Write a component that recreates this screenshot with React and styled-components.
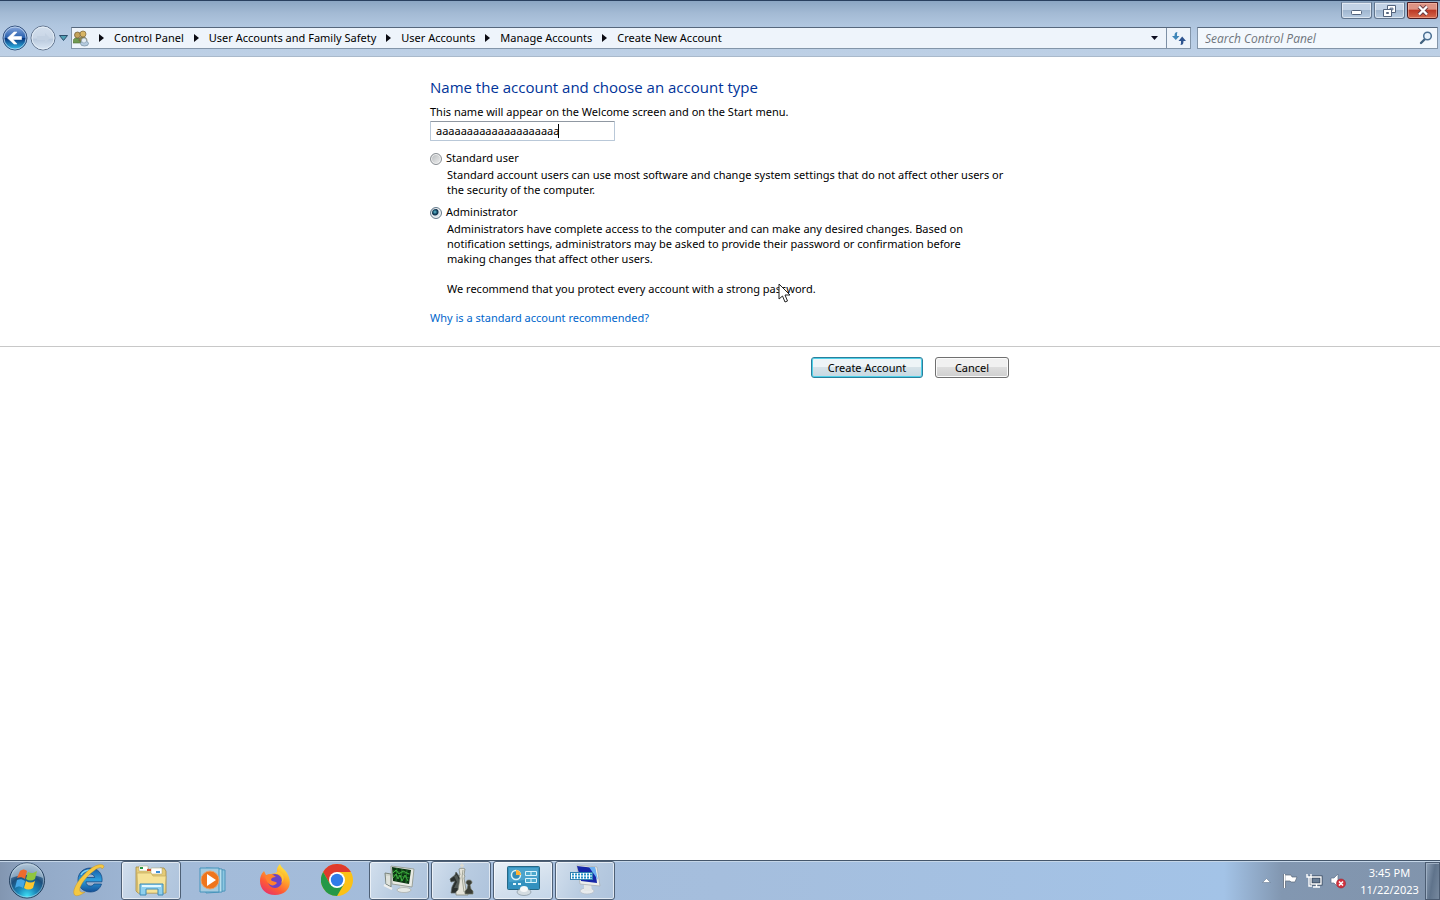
import React, { useState } from "react";
import styled, { createGlobalStyle, css } from "styled-components";

const GlobalStyle = createGlobalStyle`
  * { box-sizing: border-box; }
  body {
    margin: 0;
    background: #fff;
    color: #000;
    font: 11px/15px "Noto Sans", "Open Sans", sans-serif;
  }
  button, input { font: inherit; color: inherit; }
`;

const Desktop = styled.div`
  display: flex;
  flex-direction: column;
  min-height: 100vh;
`;

/* ---------- window frame ---------- */
const Frame = styled.header`
  border-top: 1px solid #29405f;
  border-bottom: 1px solid #a9b9cb;
  background: linear-gradient(#8ba6c3 0, #a3bad4 12px, #b0c6df 24px, #b9cee6 40px, #bed0e5 56px);
`;

const TitleBar = styled.div`
  display: flex;
  justify-content: flex-end;
  gap: 2px;
  height: 24px;
  padding: 1px 2px 0 0;
`;

const CaptionButton = styled.button`
  display: flex;
  align-items: center;
  justify-content: center;
  width: 31px;
  height: 17px;
  padding: 0;
  border: 1px solid #61758e;
  border-top-color: #8a9db5;
  border-radius: 0 0 3px 3px;
  box-shadow: inset 0 0 0 1px rgba(255, 255, 255, 0.5);
  background: linear-gradient(#c3d3e6 45%, #a0b6cf 50%, #b8cce2);
  ${(p) =>
    p.$close &&
    css`
      border-color: #4b1b20;
      box-shadow: inset 0 0 0 1px rgba(255, 200, 180, 0.5);
      background: linear-gradient(#dd9384 40%, #bd3a26 50%, #d56a4d);
    `}
`;

const NavRow = styled.div`
  display: flex;
  align-items: center;
  height: 31px;
  padding: 0 2px 5px;
`;

const HistoryButton = styled.button`
  display: flex;
  padding: 0;
  border: 0;
  margin-right: 2px;
  background: none;
`;

const RecentButton = styled(HistoryButton)`
  margin: 0 3px 0 1px;
`;

const AddressBar = styled.nav`
  display: flex;
  flex: 1;
  align-items: center;
  height: 22px;
  padding-left: 1px;
  border: 1px solid #8395a9;
  border-top-color: #56677c;
  background: #eef4fb;
`;

const Crumb = styled.a`
  padding-bottom: 2px;
  color: #000;
  text-decoration: none;
  white-space: nowrap;
`;

const CrumbArrow = styled.svg`
  flex: none;
  margin: 0 10px;
`;

const AddressButton = styled.button`
  display: flex;
  align-items: center;
  justify-content: center;
  width: 24px;
  height: 20px;
  padding: 0;
  border: 0;
  background: none;
  ${(p) => p.$end && css`margin-left: auto;`}
  ${(p) => p.$divided && css`border-left: 1px solid #7d90a6;`}
`;

const SearchBox = styled.form`
  display: flex;
  align-items: center;
  width: 241px;
  height: 22px;
  padding: 0 4px 0 7px;
  margin-left: 6px;
  border: 1px solid #8395a9;
  border-top-color: #56677c;
  background: #f3f8fd;
`;

const SearchInput = styled.input`
  flex: 1;
  min-width: 0;
  padding: 0;
  border: 0;
  outline: 0;
  background: none;
  font-family: "Open Sans", sans-serif;
  font-size: 12px;
  &::placeholder { color: #6f757c; font-style: italic; opacity: 1; }
`;

const SearchButton = styled.button`
  display: flex;
  padding: 0;
  border: 0;
  background: none;
`;

/* ---------- page ---------- */
const Page = styled.main`
  flex: 1;
`;

const Column = styled.div`
  position: relative;
  max-width: 580px;
  margin: 0 auto;
`;

const AccountForm = styled.form`
  padding-top: 19px;
`;

const Heading = styled.h1`
  margin: 0 0 6px;
  color: #003399;
  font-family: "Open Sans", sans-serif;
  font-size: 15px;
  line-height: 22px;
  font-weight: 400;
`;

const FieldLabel = styled.label`
  display: block;
`;

const FieldWrap = styled.div`
  position: relative;
  width: 185px;
  margin: 2px 0 9px;
`;

const NameInput = styled.input`
  display: block;
  width: 100%;
  height: 20px;
  padding: 0 5px 2px;
  border: 1px solid #b9c8d8;
  border-top-color: #9098a2;
  border-radius: 1px;
  outline: 0;
  caret-color: transparent;
`;

const Caret = styled.span`
  position: absolute;
  top: 3px;
  left: 128px;
  width: 1px;
  height: 14px;
  background: #000;
`;

const Option = styled.div`
  margin-bottom: ${(p) => (p.$last ? 14 : 7)}px;
`;

const OptionLabel = styled.label`
  display: flex;
  align-items: center;
  gap: 4px;
  height: 15px;
  margin-bottom: 2px;
`;

const Radio = styled.input`
  appearance: none;
  flex: none;
  width: 12px;
  height: 12px;
  margin: 2px 0 0;
  border: 1px solid #8a8f94;
  border-radius: 50%;
  box-shadow: inset 0 0 0 1px #f2f2f2;
  background: linear-gradient(135deg, #b6babd, #f0f0f0);
  &:checked {
    border-color: #667b8c;
    background: radial-gradient(circle at 4px 4px, #67c3d8 0, #17506b 2px, #10314c 3px, #dbe5ec 4px);
  }
`;

const Description = styled.p`
  margin: 0 0 15px 17px;
  white-space: pre-line;
  &:last-child { margin-bottom: 0; }
`;

const HelpLink = styled.a`
  display: inline-block;
  color: #0066cc;
  text-decoration: none;
`;

const Footer = styled.footer`
  margin-top: 21px;
  border-top: 1px solid #c8c8c8;
`;

const Actions = styled(Column)`
  display: flex;
  justify-content: flex-end;
  gap: 12px;
  padding: 10px 1px 0 0;
`;

const PushButton = styled.button`
  width: ${(p) => (p.$primary ? 112 : 74)}px;
  height: 21px;
  padding: 0;
  border: 1px solid #707070;
  border-radius: 3px;
  box-shadow: inset 0 0 0 1px #fbfbfb;
  background: linear-gradient(#f1f1f1 45%, #dddddd 50%, #cfcfcf);
  line-height: 17px;
  ${(p) =>
    p.$primary &&
    css`
      border-color: #2b7f9c;
      box-shadow: inset 0 0 0 1px #4fd0e8;
      background: linear-gradient(#eef4f7 45%, #d6e2e8 50%, #c6d8e2);
    `}
`;

const Pointer = styled.svg`
  position: absolute;
  top: 207px;
  left: 348px;
  pointer-events: none;
`;

/* ---------- taskbar ---------- */
const Taskbar = styled.footer`
  display: flex;
  height: 40px;
  border-top: 1px solid #44566b;
  box-shadow: inset 0 1px 0 #c5d6e8;
  background: linear-gradient(90deg, #8296b1 0, #93aac8 40px, #a3bbd9 180px, #a5bedd 50%, #a3c3e7 85%, #8297b1 89%, #8194ac);
`;

const StartButton = styled.button`
  display: flex;
  justify-content: center;
  width: 54px;
  padding: 0;
  border: 0;
  margin-right: 5px;
  background: none;
`;

const Tasks = styled.div`
  display: flex;
  gap: 2px;
`;

const Task = styled.button`
  display: flex;
  align-items: center;
  justify-content: center;
  width: 60px;
  height: 39px;
  padding: 0 0 1px;
  border: 1px solid transparent;
  border-radius: 3px;
  background: none;
  ${(p) =>
    p.$open &&
    css`
      border-color: #4e6076;
      box-shadow: inset 0 0 0 1px rgba(255, 255, 255, 0.6);
      background: linear-gradient(115deg, #d2dfed, #b9cce1 50%, #aec3dc);
    `}
  ${(p) =>
    p.$active &&
    css`
      background: linear-gradient(160deg, #e9f0f7, #d2dfed 60%, #c4d6e9);
    `}
`;

const Tray = styled.div`
  display: flex;
  align-items: center;
  margin-left: auto;
`;

const TrayButton = styled.button`
  display: flex;
  align-items: center;
  justify-content: center;
  width: 24px;
  height: 24px;
  padding: 0;
  border: 0;
  background: none;
`;

const Clock = styled.time`
  width: 75px;
  padding-left: 4px;
  color: #fff;
  line-height: 17px;
  text-align: center;
`;

const ShowDesktop = styled.button`
  width: 15px;
  height: 38px;
  padding: 0;
  border: 1px solid #4b5c72;
  box-shadow: inset 1px 1px 0 #9eafc3;
  background: linear-gradient(100deg, #8fa1b7, #5f738b 50%, #77899f);
`;

/* ---------- icons ---------- */
const BackIcon = () => (
  <svg width="26" height="26" viewBox="0 0 26 26">
    <defs>
      <linearGradient id="back" x1="0" y1="0" x2="0" y2="1">
        <stop offset="0" stopColor="#8caade" />
        <stop offset=".48" stopColor="#2860ae" />
        <stop offset=".52" stopColor="#07367f" />
        <stop offset="1" stopColor="#36c6f2" />
      </linearGradient>
    </defs>
    <circle cx="13" cy="13" r="12" fill="url(#back)" stroke="#37547f" />
    <circle cx="13" cy="13" r="11" fill="none" stroke="#d0e3f5" strokeOpacity=".7" />
    <path d="M5.500 13l6.500-6h3l-4 4.500h8.500v3H11l4 4.500h-3z" fill="#fff" stroke="#fff" strokeWidth=".6" />
  </svg>
);

const ForwardIcon = () => (
  <svg width="26" height="26" viewBox="0 0 26 26">
    <defs>
      <linearGradient id="fwd" x1="0" y1="0" x2="0" y2="1">
        <stop offset="0" stopColor="#d3dfed" />
        <stop offset=".5" stopColor="#c9d6e6" />
        <stop offset=".55" stopColor="#b9c9dd" />
        <stop offset="1" stopColor="#dce8f5" />
      </linearGradient>
    </defs>
    <circle cx="13" cy="13" r="12" fill="url(#fwd)" stroke="#64768f" />
    <circle cx="13" cy="13" r="11" fill="none" stroke="#eaf2fa" strokeOpacity=".8" />
    <path d="M20 13l-5-5v3H7v4h8v3z" fill="#c3d1e2" />
  </svg>
);

const UsersIcon = () => (
  <svg width="16" height="17" viewBox="0 0 16 17">
    <path d="M0 13c0-4 1-5 4-5s4 2 4 5z" fill="#6f9a50" stroke="#566b3b" strokeWidth=".6" />
    <circle cx="4.500" cy="5" r="3" fill="#c4a35c" stroke="#6c5833" strokeWidth=".7" />
    <path d="M6 11c0-3 1-4 4-4s4 2 4 4z" fill="#8f8753" stroke="#69613e" strokeWidth=".6" />
    <circle cx="10" cy="4" r="3" fill="#d8b565" stroke="#7a6439" strokeWidth=".7" />
    <ellipse cx="11.500" cy="13.500" rx="4" ry="2.500" fill="#b5cbdf" stroke="#748c9f" strokeWidth=".7" />
    <circle cx="11" cy="10.500" r="2.500" fill="#e4edf5" stroke="#8297a9" strokeWidth=".6" />
  </svg>
);

const Arrow = () => (
  <CrumbArrow width="5" height="8" viewBox="0 0 5 8">
    <path d="M0 0l5 4-5 4z" fill="#0b0b12" />
  </CrumbArrow>
);

const RefreshIcon = () => (
  <svg width="16" height="16" viewBox="0 0 16 16">
    <path d="M6.500 2C4.300 2 3.500 3 3.500 6H1l3.800 4L8.500 6H6c0-2 0-3 .5-4z" fill="#3f86b8" />
    <path d="M9.500 15c2.200 0 3-1 3-4H15l-3.800-4.500L7.500 11H10c0 2 0 3-.5 4z" fill="#2f5590" />
  </svg>
);

const MagnifierIcon = () => (
  <svg width="14" height="14" viewBox="0 0 14 14">
    <path d="M6 8l-4 4" stroke="#42627f" strokeWidth="2.4" strokeLinecap="round" />
    <circle cx="8.5" cy="5" r="3.8" fill="#e8f2fb" stroke="#4b7093" strokeWidth="1.5" />
  </svg>
);

const MinimizeIcon = () => (
  <svg width="13" height="12" viewBox="0 0 13 12">
    <rect x="1.5" y="5.5" width="10" height="4" rx="1" fill="#fff" stroke="#53637c" />
  </svg>
);

const RestoreIcon = () => (
  <svg width="13" height="12" viewBox="0 0 13 12">
    <path d="M4.500.5h8v7h-8z" fill="#fff" stroke="#53637c" />
    <path d="M7 3h3v2H7z" fill="#9db1ca" stroke="#53637c" strokeWidth=".7" />
    <path d="M.5 4.500h8v7h-8z" fill="#fff" stroke="#53637c" />
    <path d="M3.500 7.500h2v1h-2z" fill="#9db1ca" stroke="#53637c" />
  </svg>
);

const CloseIcon = () => (
  <svg width="12" height="11" viewBox="0 0 12 11">
    <path d="M2 1.500l8 8M10 1.500l-8 8" stroke="#653a42" strokeWidth="4" />
    <path d="M2 1.500l8 8M10 1.500l-8 8" stroke="#fff" strokeWidth="2.4" />
  </svg>
);

const StartIcon = () => (
  <svg width="38" height="39" viewBox="0 0 38 39">
    <defs>
      <radialGradient id="orb" cx=".5" cy=".95" r=".95">
        <stop offset="0" stopColor="#3fe0f5" />
        <stop offset=".3" stopColor="#1a86b9" />
        <stop offset=".6" stopColor="#1d4f7c" />
        <stop offset="1" stopColor="#8fabc4" />
      </radialGradient>
    </defs>
    <circle cx="19" cy="19.500" r="17.500" fill="url(#orb)" stroke="#26415f" />
    <circle cx="19" cy="19.500" r="16.500" fill="none" stroke="#cfe3f1" strokeOpacity=".5" />
    <path d="M3 17a16 15 0 0 1 32 0c-8-4-22-4-32 0z" fill="#d5e4ef" opacity=".5" />
    <path d="M12 10c3-2 5-2 7 0l-2 8c-3-2-5-2-8-1z" fill="#ee6a2d" />
    <path d="M20 11c3 2 6 1 9-1l-2 8c-3 2-6 2-9 0z" fill="#8fc640" />
    <path d="M9 19c3-1 5-1 8 1l-2 7c-3-2-5-2-8 0z" fill="#45a7e6" />
    <path d="M18 20c3 2 6 2 9 0l-2 7c-3 2-6 2-9 0z" fill="#fdc72e" />
  </svg>
);

const ExplorerBrowserIcon = () => (
  <svg width="34" height="34" viewBox="0 0 34 34">
    <defs>
      <linearGradient id="ie" x1="0" y1="0" x2="0" y2="1">
        <stop offset="0" stopColor="#1657a4" />
        <stop offset=".5" stopColor="#2f9fdc" />
        <stop offset="1" stopColor="#134f97" />
      </linearGradient>
    </defs>
    <path
      d="M18.500 5C11 5 6 10 6 17s5 12 12.500 12c5.500 0 9.500-3 11-8h-7.500c-1 1.600-2.200 2-3.700 2-2.600 0-4.300-1.600-4.300-4.200h16C31 10.500 25.500 5 18.500 5zM14 14.500c.6-2.200 2-3.500 4.400-3.500s3.800 1.300 4.300 3.500z"
      fill="url(#ie)"
      stroke="#0d437f"
      strokeWidth=".7"
    />
    <path d="M9 12c2-4 6-5 10-5" fill="none" stroke="#7fd2f2" strokeWidth="1.500" />
    <path
      d="M32 4c0-4-8-3-15 3C8 14 0 26 2 31c1 3 6 2 11-2-4 1-6 0-5-4C10 19 16 12 23 7c4-3 7-3 7-1z"
      fill="#f5c842"
      stroke="#bb8b24"
      strokeWidth=".4"
    />
  </svg>
);

const FolderIcon = () => (
  <svg width="34" height="34" viewBox="0 0 34 34">
    <path d="M2 4h11l2 3h10l1-2h4l2 3v22H4L2 28z" fill="#e5cb78" stroke="#a58b45" strokeWidth=".8" />
    <path d="M5 3h9v5H5zM17 5h11v6H17z" fill="#fff" stroke="#aaa06b" strokeWidth=".5" />
    <path d="M6 4h3v2H6z" fill="#269643" />
    <path d="M13 6h4v2h-4z" fill="#d64a2b" />
    <path d="M22 8h4v2h-4z" fill="#3d8fd7" />
    <path d="M3 10h14l2 3h13l-1 17H4z" fill="#f6e398" stroke="#c3aa5f" strokeWidth=".7" />
    <path d="M6 32V21h23v11h-5v-6H12v6z" fill="#8fd0ee" stroke="#3d89b5" />
    <path d="M8 23h19" stroke="#e2f8ff" strokeWidth="2" />
  </svg>
);

const MediaIcon = () => (
  <svg width="30" height="28" viewBox="0 0 30 28">
    <path d="M11 3l16 1v21l-16 1z" fill="#8cc7e1" stroke="#4c95bb" />
    <path d="M8 2l16 1v23l-16 1z" fill="#b8dfed" stroke="#4c95bb" />
    <path d="M2 2h19v24H2z" fill="#a5cbe0" stroke="#4594bc" />
    <circle cx="12" cy="14" r="9" fill="#ef751c" stroke="#e5a16b" />
    <path d="M9 8l9 6-9 6z" fill="#fff" />
  </svg>
);

const FirefoxIcon = () => (
  <svg width="32" height="32" viewBox="0 0 32 32">
    <defs>
      <linearGradient id="fox" x1=".8" y1="0" x2=".2" y2="1">
        <stop offset="0" stopColor="#fff044" />
        <stop offset=".35" stopColor="#ffac29" />
        <stop offset=".7" stopColor="#ff5a36" />
        <stop offset="1" stopColor="#e42f70" />
      </linearGradient>
    </defs>
    <path d="M21 0c1 4 5 5 7 9 7 12 0 22-12 22C7 31 1 25 1 17c0-4 1-7 4-10l2 4 5-1c3-1 5-1 7 0-2-4-1-7 2-10z" fill="url(#fox)" />
    <circle cx="16" cy="17" r="7" fill="#6b43c7" />
    <path d="M6 12c4-3 8-2 11 1-3 0-5 1-5 3 1 2 5 1 6 3-4 5-10 2-12-7z" fill="#ff812e" />
    <path d="M16 10c6-1 9 4 6 9 4-3 3-8 0-10-2-2-4-2-6 1z" fill="#ffc735" />
  </svg>
);

const ChromeIcon = () => (
  <svg width="32" height="32" viewBox="0 0 32 32">
    <circle cx="16" cy="16" r="16" fill="#fbc116" />
    <path d="M2.140 8A16 16 0 0 1 29.860 8H16L9 20z" fill="#df3a2c" />
    <path d="M2.140 8A16 16 0 0 0 16 32l7-12H9z" fill="#249847" />
    <circle cx="16" cy="16" r="8" fill="#fff" />
    <circle cx="16" cy="16" r="6.200" fill="#2f7ce8" />
  </svg>
);

const TaskManagerIcon = () => (
  <svg width="32" height="30" viewBox="0 0 32 30">
    <path d="M2 8l6 1v13l-5-3z" fill="#cfd4cc" stroke="#7c857c" />
    <path d="M4 11v8M6 11v9" stroke="#eef0ec" />
    <path d="M17 20h8l1 4h-9z" fill="#d5d8d5" />
    <ellipse cx="21" cy="25" rx="7" ry="2.500" fill="#e6e9e6" stroke="#a7aca7" strokeWidth=".7" />
    <path d="M8 1l23 3-2 18-20-3z" fill="#e9ebe5" stroke="#9ba29a" />
    <path d="M9 2l19 3-2 14-16-3z" fill="#0c3512" />
    <path d="M10 6l17 3M10 10l17 3M14 3l-1 13M19 4l-1 13M24 5l-1 13" stroke="#237729" />
    <path d="M10 8l3-3 3 4 4-3 6 3M10 13l3-4 2 5 2-4 2 6 3-6 3 6" fill="none" stroke="#3fb03e" />
    <path d="M1 20l8 4" stroke="#efefed" strokeWidth="2" />
  </svg>
);

const ChessIcon = () => (
  <svg width="26" height="34" viewBox="0 0 26 34">
    <path d="M3 30h10l-1-5c2-4 2-8-1-12L8 9 7 12l-5 4 1 3 4-1-3 6z" fill="#2b302e" stroke="#5d645f" strokeWidth=".7" />
    <path d="M6 13l3-1 2 5-1 8H6l3-6z" fill="#6b736e" opacity=".6" />
    <path d="M12 2.500h4M14 .5v6" stroke="#dad9cf" strokeWidth="1.600" />
    <path d="M11 6c2-1 4-1 6 0l-1 6 1 1-1 2 2 12 2 2v3H8v-3l2-2 2-12-1-2 1-1z" fill="#e4e3d9" stroke="#84897d" strokeWidth=".8" />
    <path d="M15 7l-1 7 2 15h3" fill="none" stroke="#a3a698" />
    <path d="M17 31h8v-3l-2-2-1-4 2-2c0-2-1-3-3-3s-3 1-3 3l2 2-1 4-2 2z" fill="#3b3e36" stroke="#777b6c" strokeWidth=".7" />
  </svg>
);

const ControlPanelIcon = () => (
  <svg width="33" height="32" viewBox="0 0 33 32">
    <rect x=".5" y="2.500" width="32" height="23" rx="1" fill="#3391bf" stroke="#256886" />
    <path d="M2 4h29v10C21 14 12 18 2 18z" fill="#63b6d9" opacity=".5" />
    <circle cx="9" cy="11" r="4.500" fill="#318bb6" stroke="#d9f3fc" strokeWidth="1.500" />
    <path d="M9 11V6a5 5 0 0 1 5 5z" fill="#ffb234" />
    <path d="M18.500 7.500h11v4h-11zm0 7h11v4h-11zM24 7.500v4m0 3v4" fill="#4da9cd" stroke="#d9f3fc" />
    <path d="M6 20h3m2 0h3" stroke="#e5f8fd" strokeWidth="2" />
    <ellipse cx="17" cy="28" rx="7" ry="3.500" fill="#d4dce1" stroke="#84939f" strokeWidth=".7" />
    <ellipse cx="17" cy="25" rx="4" ry="3" fill="#f5f7f8" />
  </svg>
);

const KeyboardIcon = () => (
  <svg width="32" height="32" viewBox="0 0 32 32">
    <ellipse cx="18" cy="27" rx="7" ry="3" fill="#e8ebed" stroke="#b4bcc4" strokeWidth=".7" />
    <path d="M15 20h7l1 7h-8z" fill="#e4e7e7" />
    <path d="M8 1l20 2 3 19-20-2z" fill="#eceeeb" stroke="#a9b0b5" strokeWidth=".8" />
    <path d="M8 2l18 2 2 15-16-2z" fill="#1527a8" />
    <path d="M20 3h6l3 13z" fill="#6db0f1" />
    <rect x="1.500" y="8.500" width="22" height="7" fill="#fff" stroke="#317fae" />
    <path d="M3 10.500h20M3 13.500h20" stroke="#248fc7" strokeWidth="2" strokeDasharray="2 1" />
  </svg>
);

const TrayArrow = () => (
  <svg width="9" height="6" viewBox="0 0 9 6">
    <path d="M4.500.5l4 4h-8z" fill="#fff" stroke="#596c84" strokeWidth=".5" />
  </svg>
);

const FlagIcon = () => (
  <svg width="17" height="16" viewBox="0 0 17 16">
    <path d="M2.500 1v14" stroke="#47566a" strokeWidth="3" />
    <path d="M3 2h6l1 2h5l-2 5h-4L8 8H3z" fill="#fff" stroke="#59677a" strokeWidth=".7" />
    <path d="M2.500 1v14" stroke="#fff" strokeWidth="1.500" />
  </svg>
);

const NetworkIcon = () => (
  <svg width="17" height="16" viewBox="0 0 17 16">
    <path d="M5 4h10v7H5z" fill="#697d94" stroke="#35455a" strokeWidth="3" />
    <path d="M5 4h10v7H5zM7 14h7M10.500 11v3" fill="none" stroke="#fff" strokeWidth="1.400" />
    <path d="M1 1v3h4V1M3 4v9h3" fill="none" stroke="#fff" strokeWidth="1.400" />
  </svg>
);

const VolumeIcon = () => (
  <svg width="17" height="16" viewBox="0 0 17 16">
    <path d="M1 5h3l4-4v13l-4-4H1z" fill="#fff" stroke="#607189" strokeWidth=".7" />
    <circle cx="11" cy="10.500" r="4.500" fill="#d4313e" stroke="#982631" strokeWidth=".6" />
    <path d="M9 8.500l4 4m0-4l-4 4" stroke="#fff" strokeWidth="1.600" />
  </svg>
);

const CRUMBS = ["Control Panel", "User Accounts and Family Safety", "User Accounts", "Manage Accounts", "Create New Account"];

const TASKS = [
  { name: "Internet Explorer", Icon: ExplorerBrowserIcon },
  { name: "Windows Explorer", Icon: FolderIcon, open: true },
  { name: "Media Player", Icon: MediaIcon },
  { name: "Firefox", Icon: FirefoxIcon },
  { name: "Chrome", Icon: ChromeIcon },
  { name: "Task Manager", Icon: TaskManagerIcon, open: true },
  { name: "Chess", Icon: ChessIcon, open: true },
  { name: "Control Panel", Icon: ControlPanelIcon, open: true, active: true },
  { name: "On-Screen Keyboard", Icon: KeyboardIcon, open: true },
];

const ACCOUNT_TYPES = [
  {
    id: "standard",
    label: "Standard user",
    text: ["Standard account users can use most software and change system settings that do not affect other users or\nthe security of the computer."],
  },
  {
    id: "admin",
    label: "Administrator",
    text: [
      "Administrators have complete access to the computer and can make any desired changes. Based on\nnotification settings, administrators may be asked to provide their password or confirmation before\nmaking changes that affect other users.",
      "We recommend that you protect every account with a strong password.",
    ],
  },
];

export default function App() {
  const [type, setType] = useState("admin");
  return (
    <Desktop>
      <GlobalStyle />
      <Frame>
        <TitleBar>
          <CaptionButton aria-label="Minimize"><MinimizeIcon /></CaptionButton>
          <CaptionButton aria-label="Restore"><RestoreIcon /></CaptionButton>
          <CaptionButton aria-label="Close" $close><CloseIcon /></CaptionButton>
        </TitleBar>
        <NavRow>
          <HistoryButton aria-label="Back"><BackIcon /></HistoryButton>
          <HistoryButton aria-label="Forward"><ForwardIcon /></HistoryButton>
          <RecentButton aria-label="Recent pages">
            <svg width="9" height="6" viewBox="0 0 9 6">
              <path d="M.5.5h8l-4 5z" fill="#4fa0b4" stroke="#2b4d6c" />
            </svg>
          </RecentButton>
          <AddressBar aria-label="Address">
            <UsersIcon />
            {CRUMBS.map((c) => (
              <React.Fragment key={c}>
                <Arrow />
                <Crumb href="#">{c}</Crumb>
              </React.Fragment>
            ))}
            <AddressButton aria-label="Previous locations" $end>
              <svg width="7" height="4" viewBox="0 0 7 4"><path d="M0 0h7L3.500 4z" fill="#0d0d20" /></svg>
            </AddressButton>
            <AddressButton aria-label="Refresh" $divided><RefreshIcon /></AddressButton>
          </AddressBar>
          <SearchBox role="search">
            <SearchInput type="text" aria-label="Search Control Panel" placeholder="Search Control Panel" />
            <SearchButton type="button" aria-label="Search"><MagnifierIcon /></SearchButton>
          </SearchBox>
        </NavRow>
      </Frame>

      <Page>
        <AccountForm id="account" onSubmit={(e) => e.preventDefault()}>
          <Column>
            <Heading>Name the account and choose an account type</Heading>
            <FieldLabel htmlFor="name">This name will appear on the Welcome screen and on the Start menu.</FieldLabel>
            <FieldWrap>
              <NameInput id="name" type="text" defaultValue="aaaaaaaaaaaaaaaaaaaa" />
              <Caret />
            </FieldWrap>
            {ACCOUNT_TYPES.map((t, i) => (
              <Option key={t.id} $last={i === ACCOUNT_TYPES.length - 1}>
                <OptionLabel>
                  <Radio type="radio" name="type" checked={type === t.id} onChange={() => setType(t.id)} />
                  {t.label}
                </OptionLabel>
                {t.text.map((p) => <Description key={p}>{p}</Description>)}
              </Option>
            ))}
            <HelpLink href="#">Why is a standard account recommended?</HelpLink>
            <Pointer width="14" height="20" viewBox="0 0 14 20">
              <path d="M1 1v15l3.500-3 2.500 6 2.500-1-2.500-6h5z" fill="#fff" stroke="#222" />
            </Pointer>
          </Column>
        </AccountForm>
        <Footer>
          <Actions>
            <PushButton type="submit" form="account" $primary>Create Account</PushButton>
            <PushButton type="button">Cancel</PushButton>
          </Actions>
        </Footer>
      </Page>

      <Taskbar>
        <StartButton aria-label="Start"><StartIcon /></StartButton>
        <Tasks>
          {TASKS.map(({ name, Icon, open, active }) => (
            <Task key={name} aria-label={name} $open={open} $active={active}><Icon /></Task>
          ))}
        </Tasks>
        <Tray>
          <TrayButton aria-label="Show hidden icons"><TrayArrow /></TrayButton>
          <TrayButton aria-label="Action Center"><FlagIcon /></TrayButton>
          <TrayButton aria-label="Network"><NetworkIcon /></TrayButton>
          <TrayButton aria-label="Volume"><VolumeIcon /></TrayButton>
          <Clock>3:45 PM<br />11/22/2023</Clock>
          <ShowDesktop aria-label="Show desktop" />
        </Tray>
      </Taskbar>
    </Desktop>
  );
}
